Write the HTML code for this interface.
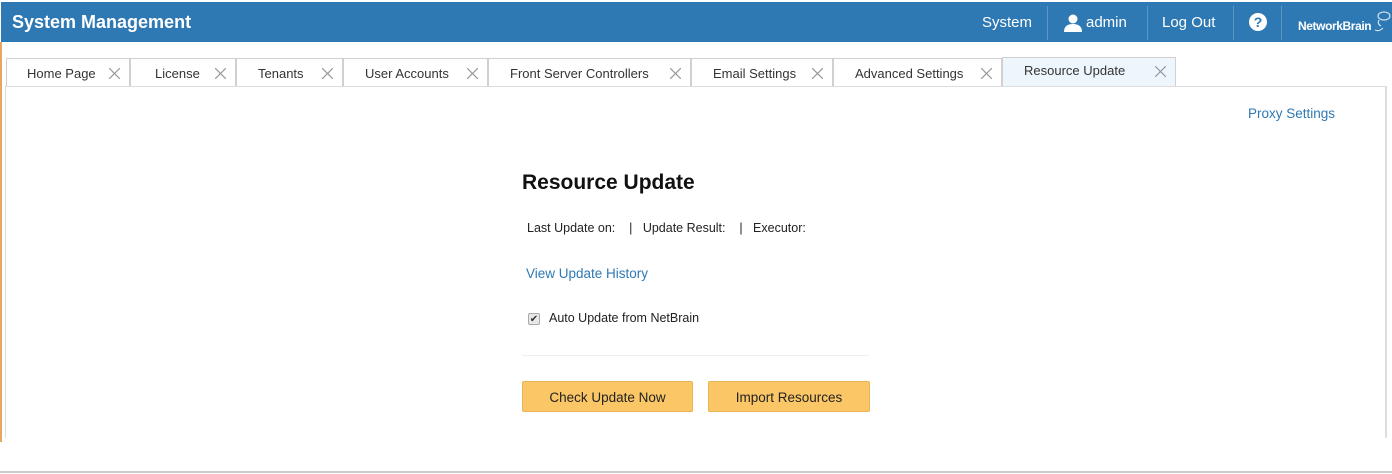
<!DOCTYPE html>
<html><head><meta charset="utf-8"><style>
*{margin:0;padding:0;box-sizing:border-box}
body{width:1392px;height:474px;background:#fff;font-family:"Liberation Sans",sans-serif;position:relative;overflow:hidden;color:#222}
.hdr{position:absolute;left:1px;top:2px;width:1391px;height:40px;background:#2e79b4;color:#fff}
.hdr .t{position:absolute;left:11px;top:10px;font-size:18px;font-weight:bold}
.nav{position:absolute;top:0;height:40px;font-size:15px;line-height:42px;color:#fff}
.sep{position:absolute;top:4px;width:1px;height:34px;background:#5b96c5}
.tabs{position:absolute;top:58px;left:6px;height:29px}
.tab{position:absolute;top:0;height:28px;border:1px solid #d0d0d0;border-bottom:none;background:#fff;font-size:13px;line-height:30px;color:#333}
.tab svg{position:absolute;right:9px;top:9px}
.panel{position:absolute;left:5px;top:86px;width:1382px;height:352px;border-left:1px solid #ddd;border-right:2px solid #ddd;border-top:1px solid #ddd}
.btn{position:absolute;top:381px;height:31px;background:#fbc665;border:1px solid #eab355;border-radius:2px;font-size:13.5px;line-height:31px;text-align:center;color:#222}
</style></head><body>
<div style="position:absolute;left:0;top:42px;width:2px;height:400px;background:#e4a860"></div>
<div class="hdr"><div class="t">System Management</div>
<div class="nav" style="left:981px">System</div>
<div class="sep" style="left:1046px"></div>
<svg style="position:absolute;left:1063px;top:12px" width="18" height="18" viewBox="0 0 18 18"><circle cx="9" cy="5" r="4.5" fill="#fff"/><path d="M0 18 Q0 10 9 10 Q18 10 18 18Z" fill="#fff"/></svg>
<div class="nav" style="left:1085px">admin</div>
<div class="sep" style="left:1146px"></div>
<div class="nav" style="left:1161px">Log Out</div>
<div class="sep" style="left:1232px"></div>
<div style="position:absolute;left:1248px;top:11px;width:18px;height:18px;border-radius:50%;background:#fff;color:#2e79b4;font-weight:bold;font-size:14px;line-height:18px;text-align:center">?</div>
<div class="sep" style="left:1280px"></div>
<div style="position:absolute;left:1297px;top:17px;font-size:12px;font-weight:bold;letter-spacing:-0.4px;color:#fff">NetworkBrain</div>
<svg style="position:absolute;left:1372px;top:8px" width="20" height="24" viewBox="0 0 20 24"><ellipse cx="11" cy="6" rx="6" ry="4" fill="none" stroke="#cfe0ee" stroke-width="1.2"/><path d="M6 10 Q4 14 8 16 M2 20 Q6 22 10 18" fill="none" stroke="#cfe0ee" stroke-width="1.2"/></svg>
</div>
<div class="tabs">
<div class="tab" style="left:0;width:124px"><span style="margin-left:20px">Home Page</span><svg width="11" height="11"><path d="M0 0L11 11M11 0L0 11" stroke="#999" stroke-width="1.2"/></svg></div>
<div class="tab" style="left:124px;width:106px"><span style="margin-left:24px">License</span><svg width="11" height="11"><path d="M0 0L11 11M11 0L0 11" stroke="#999" stroke-width="1.2"/></svg></div>
<div class="tab" style="left:230px;width:107px"><span style="margin-left:21px">Tenants</span><svg width="11" height="11"><path d="M0 0L11 11M11 0L0 11" stroke="#999" stroke-width="1.2"/></svg></div>
<div class="tab" style="left:337px;width:145px"><span style="margin-left:21px">User Accounts</span><svg width="11" height="11"><path d="M0 0L11 11M11 0L0 11" stroke="#999" stroke-width="1.2"/></svg></div>
<div class="tab" style="left:482px;width:203px"><span style="margin-left:21px">Front Server Controllers</span><svg width="11" height="11"><path d="M0 0L11 11M11 0L0 11" stroke="#999" stroke-width="1.2"/></svg></div>
<div class="tab" style="left:685px;width:142px"><span style="margin-left:21px">Email Settings</span><svg width="11" height="11"><path d="M0 0L11 11M11 0L0 11" stroke="#999" stroke-width="1.2"/></svg></div>
<div class="tab" style="left:827px;width:169px"><span style="margin-left:21px">Advanced Settings</span><svg width="11" height="11"><path d="M0 0L11 11M11 0L0 11" stroke="#999" stroke-width="1.2"/></svg></div>
<div class="tab" style="left:996px;width:174px;top:-1px;height:30px;background:#eef6fd;line-height:26px"><span style="margin-left:21px">Resource Update</span><svg width="11" height="11" style="top:8px"><path d="M0 0L11 11M11 0L0 11" stroke="#999" stroke-width="1.2"/></svg></div>
</div>
<div class="panel"></div>
<div style="position:absolute;left:1248px;top:106px;font-size:13.5px;color:#2e79b4">Proxy Settings</div>
<div style="position:absolute;left:522px;top:171px;font-size:21px;font-weight:bold;color:#111">Resource Update</div>
<div style="position:absolute;left:527px;top:221px;font-size:12.5px;color:#222">Last Update on:&nbsp;&nbsp;&nbsp;&nbsp;|&nbsp;&nbsp;&nbsp;Update Result:&nbsp;&nbsp;&nbsp;&nbsp;|&nbsp;&nbsp;&nbsp;Executor:</div>
<div style="position:absolute;left:526px;top:266px;font-size:13.5px;color:#2e79b4">View Update History</div>
<div style="position:absolute;left:528px;top:313px;width:12px;height:12px;border:1px solid #aaa;border-radius:2px;background:#e8e8e8;font-size:10px;line-height:11px;text-align:center;color:#333">✔</div>
<div style="position:absolute;left:549px;top:311px;font-size:12.5px;color:#222">Auto Update from NetBrain</div>
<div style="position:absolute;left:522px;top:355px;width:347px;height:1px;background:#eee"></div>
<div class="btn" style="left:522px;width:171px">Check Update Now</div>
<div class="btn" style="left:708px;width:162px">Import Resources</div>
<div style="position:absolute;left:0;top:471px;width:1392px;height:2px;background:#ccc"></div>
</body></html>
